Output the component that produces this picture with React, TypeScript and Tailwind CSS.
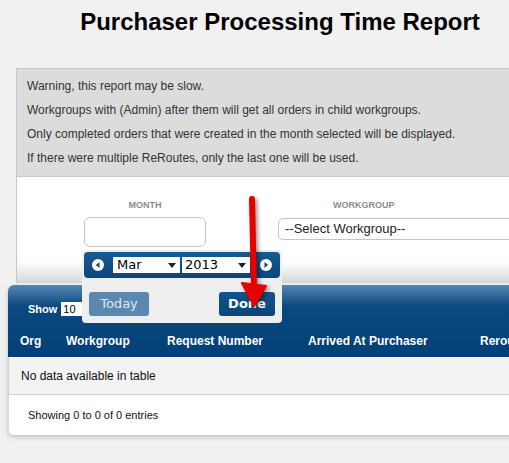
export default function App() {
  const notes = [
    "Warning, this report may be slow.",
    "Workgroups with (Admin) after them will get all orders in child workgroups.",
    "Only completed orders that were created in the month selected will be displayed.",
    "If there were multiple ReRoutes, only the last one will be used.",
  ];

  const columns = [
    { label: "Org", w: "w-[46px]" },
    { label: "Workgroup", w: "w-[101px]" },
    { label: "Request Number", w: "w-[141px]" },
    { label: "Arrived At Purchaser", w: "w-[172px]" },
    { label: "Rerouted", w: "w-[120px]" },
  ];

  return (
    <div className="relative w-[509px] h-[463px] overflow-hidden bg-[#f1f1f1] font-['Liberation_Sans',Arial,sans-serif]">
      <div className="w-[560px]">
        {/* Title */}
        <h1 className="h-[68px] pt-[8px] text-center text-[24px] font-bold leading-[28px] text-black">
          Purchaser Processing Time Report
        </h1>

        {/* Warning + filters */}
        <div className="ml-[16px] border border-[#c6c6c6] border-b-0">
          <div className="bg-[#dcdcdc] pl-[10px] pt-[5px] pb-[6px] text-[12px] leading-[24px] text-[#333]">
            {notes.map((n) => (
              <p key={n}>{n}</p>
            ))}
          </div>
          <div className="h-[107px] border-t border-[#c6c6c6] bg-gradient-to-b from-white via-white via-80% to-[#d6d6d6] pt-[23px]">
            <div className="flex">
              <div className="ml-[67px] w-[122px]">
                <div className="text-center text-[9px] font-bold leading-[10px] text-[#8c8c8c]">MONTH</div>
                <div className="mt-[7px] h-[30px] rounded-[6px] border border-[#c4c4c4] bg-white" />
              </div>
              <div className="ml-[72px] flex-1">
                <div className="pl-[55px] text-[9px] font-bold leading-[10px] text-[#8c8c8c]">WORKGROUP</div>
                <div className="mt-[8px] flex h-[22px] items-center rounded-[5px] border border-[#c4c4c4] bg-white pl-[6px] text-[13px] text-[#222]">
                  --Select Workgroup--
                </div>
              </div>
            </div>
          </div>
        </div>

        {/* Table */}
        <div className="mt-[2px] ml-[8px] rounded-tl-[6px] rounded-bl-[6px] shadow-[0_2px_5px_rgba(0,0,0,0.2)]">
          <div className="h-[72px] rounded-tl-[6px] bg-[linear-gradient(to_bottom,#5487b2_0%,#0b487f_30%,#024079_100%)]">
            <div className="flex h-[40px] items-center pl-[20px] pt-[8px]">
              <span className="text-[11px] font-bold text-white">Show</span>
              <span className="ml-[4px] flex h-[14px] w-[22px] items-center bg-white pl-[2px] text-[11px] text-black">10</span>
            </div>
            <div className="flex h-[32px] items-center pl-[12px] text-[12px] font-bold text-white">
              {columns.map((c) => (
                <div key={c.label} className={`${c.w} shrink-0`}>
                  {c.label}
                </div>
              ))}
            </div>
          </div>
          <div className="flex h-[38px] items-center border-b border-l border-[#cfcfcf] bg-[#f3f3f3] pl-[12px] text-[12px] text-[#111]">
            No data available in table
          </div>
          <div className="flex h-[40px] items-center rounded-bl-[6px] border-l border-[#dcdcdc] bg-white pl-[19px] text-[11px] text-[#111]">
            Showing 0 to 0 of 0 entries
          </div>
        </div>
      </div>

      {/* Datepicker popup */}
      <div className="absolute left-[82px] top-[250px] h-[73px] w-[200px] rounded-[4px] bg-[#eeeeee] p-[2px] font-['DejaVu_Sans',Verdana,sans-serif]">
        <div className="flex h-[26px] items-center rounded-[4px] bg-[linear-gradient(to_bottom,#195a91,#08467d)] px-[8px]">
          <svg width="12" height="12" viewBox="0 0 12 12">
            <circle cx="6" cy="6" r="6" fill="#fff" />
            <path d="M7.5 3 L3.8 6 L7.5 9 Z" fill="#0b4b82" />
          </svg>
          <div className="ml-[9px] flex h-[16px] w-[67px] items-center justify-between bg-white pl-[4px] pr-[4px] text-[13px] text-black">
            <span>Mar</span>
            <svg width="8" height="5" viewBox="0 0 8 5"><path d="M0 0 H8 L4 5 Z" fill="#222" /></svg>
          </div>
          <div className="ml-[2px] flex h-[16px] w-[68px] items-center justify-between bg-white pl-[3px] pr-[4px] text-[13px] text-black">
            <span>2013</span>
            <svg width="8" height="5" viewBox="0 0 8 5"><path d="M0 0 H8 L4 5 Z" fill="#222" /></svg>
          </div>
          <svg className="ml-[10px]" width="12" height="12" viewBox="0 0 12 12">
            <circle cx="6" cy="6" r="6" fill="#fff" />
            <path d="M4.5 3 L8.2 6 L4.5 9 Z" fill="#0b4b82" />
          </svg>
        </div>
        <div className="mt-[14px] flex justify-between px-[5px]">
          <button className="h-[24px] w-[60px] rounded-[3px] bg-[#5a88b0] text-[13px] text-[#dfe8f0]">Today</button>
          <button className="h-[24px] w-[56px] rounded-[3px] bg-[linear-gradient(to_bottom,#14548b,#08457b)] text-[13px] font-bold text-white">
            Done
          </button>
        </div>
      </div>

      {/* Red annotation arrow */}
      <svg className="absolute left-[236px] top-[192px] drop-shadow-[2px_2px_2px_rgba(0,0,0,0.45)]" width="36" height="120" viewBox="0 0 36 120">
        <path d="M16 7 L18 95" stroke="#e60000" strokeWidth="6" strokeLinecap="round" fill="none" />
        <path d="M6 91 L30 94 L18 114 Z" fill="#e60000" stroke="#e60000" strokeWidth="2" strokeLinejoin="round" />
      </svg>
    </div>
  );
}
